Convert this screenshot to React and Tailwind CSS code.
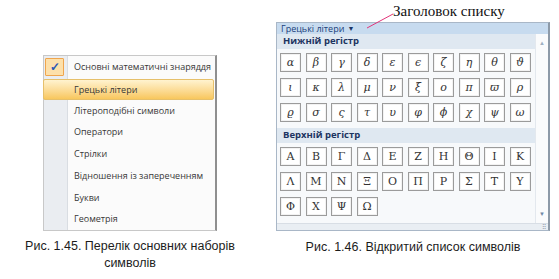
const MENU = [
  "Основні математичні знаряддя",
  "Грецькі літери",
  "Літероподібні символи",
  "Оператори",
  "Стрілки",
  "Відношення із запереченням",
  "Букви",
  "Геометрія",
];

const LOWER = [
  "α", "β", "γ", "δ", "ε", "ϵ", "ζ", "η", "θ", "ϑ",
  "ι", "κ", "λ", "μ", "ν", "ξ", "ο", "π", "ϖ", "ρ",
  "ϱ", "σ", "ς", "τ", "υ", "φ", "ϕ", "χ", "ψ", "ω",
];

const UPPER = [
  "Α", "Β", "Γ", "Δ", "Ε", "Ζ", "Η", "Θ", "Ι", "Κ",
  "Λ", "Μ", "Ν", "Ξ", "Ο", "Π", "Ρ", "Σ", "Τ", "Υ",
  "Φ", "Χ", "Ψ", "Ω",
];

function SymbolGrid({ symbols, italic }) {
  return (
    <div className="grid grid-cols-[repeat(10,21px)] gap-x-[4.5px] gap-y-[6px] pl-[3px]">
      {symbols.map((s) => (
        <div
          key={s}
          className={`flex h-[19px] w-[21px] items-center justify-center border border-[#9b9b9b] bg-white text-[11px] leading-none text-[#333] shadow-[inset_0_0_0_1px_#f2f2f2] ${italic ? "italic" : ""}`}
          style={{ fontFamily: '"DejaVu Serif", "Liberation Serif", serif' }}
        >
          {s}
        </div>
      ))}
    </div>
  );
}

function SubHeader({ children }) {
  return (
    <div className="flex h-[15px] items-center bg-[#dfe8f1] pl-[6px] text-[9.5px] font-bold text-[#1d3461]">
      {children}
    </div>
  );
}

export default function App() {
  return (
    <div
      className="flex h-[279px] w-[559px] bg-white"
      style={{ fontFamily: '"Open Sans", "Noto Sans", sans-serif' }}
    >
      {/* Left — menu of symbol sets */}
      <div className="flex w-[260px] flex-col items-center pt-[55px]">
        <div className="flex h-[176px] w-[174px] border border-[#c8c8c8] border-r-2 border-r-[#8f8f8f] bg-[#fbfbfb]">
          <div className="w-[24px] shrink-0 border-r border-[#d9dde2] bg-[#eaedf1]" />
          <div className="relative flex flex-1 flex-col">
            {MENU.map((label) => (
              <div key={label} className="flex h-[22px] items-center pl-[6px] text-[9px] text-[#383838]">
                {label}
              </div>
            ))}
            {/* highlight over the gutter + row */}
            <div className="absolute left-[-25px] top-[23px] flex h-[21px] w-[171px] items-center rounded-[2px] border border-[#e6c06b] bg-gradient-to-b from-[#fff3cf] to-[#f8c75c] pl-[30px] text-[9px] text-[#383838]">
              Грецькі літери
            </div>
            <div className="absolute left-[-23px] top-[2px] flex h-[18px] w-[19px] items-center justify-center rounded-[1px] border border-[#efa54d] bg-[#fde0aa] text-[12px] font-bold text-[#2a58b5]">
              ✓
            </div>
          </div>
        </div>
        <p
          className="mt-[7px] text-center text-[12.5px] leading-[17px] text-[#1c1c1c]"
          style={{ fontFamily: '"Liberation Sans", Arial, sans-serif' }}
        >
          Рис. 1.45. Перелік основних наборів
          <br />
          символів
        </p>
      </div>

      {/* Right — open list of symbols */}
      <div className="relative flex flex-1 flex-col pt-[22px]">
        <span
          className="absolute left-[133px] top-[2px] text-[15px] leading-[18px] text-[#111]"
          style={{ fontFamily: '"Liberation Serif", "Times New Roman", serif' }}
        >
          Заголовок списку
        </span>
        <svg className="absolute left-[105px] top-[12px]" width="30" height="18" viewBox="0 0 30 18">
          <path d="M2 16 L28 2" stroke="#e2357a" strokeWidth="1" fill="none" />
        </svg>

        <div className="ml-[16px] flex w-[274px] flex-col border border-[#a9b7c7] border-r-2 border-r-[#8d9aa8] bg-[#f7f9fb]">
          <div className="flex h-[11px] items-center bg-[#c7dbef] pl-[4px] text-[9px] leading-none text-[#20407a]">
            Грецькі літери <span className="ml-[3px] text-[7px] text-[#1b3566]">▼</span>
          </div>
          <div className="flex">
            <div className="flex w-[258px] flex-col pb-[7px]">
              <SubHeader>Нижній регістр</SubHeader>
              <div className="pt-[4px] pb-[6px]">
                <SymbolGrid symbols={LOWER} italic />
              </div>
              <SubHeader>Верхній регістр</SubHeader>
              <div className="pt-[4px]">
                <SymbolGrid symbols={UPPER} />
              </div>
            </div>
            <div className="flex flex-1 flex-col items-center justify-between border-l border-[#e3e8ee] bg-[#fafbfc] py-[6px]">
              <span className="text-[6px] leading-none text-[#9fb0c2]">▲</span>
              <span className="text-[6px] leading-none text-[#6f88a6]">▼</span>
            </div>
          </div>
          <div className="flex h-[7px] items-center justify-end border-t border-[#d8dee5] bg-[#e9eef3] pr-[3px]">
            <span className="text-[6px] leading-none tracking-[-1px] text-[#7b8794]">⠿</span>
          </div>
        </div>

        <p
          className="ml-[16px] mt-[8px] w-[274px] text-center text-[12.5px] leading-[17px] text-[#1c1c1c]"
          style={{ fontFamily: '"Liberation Sans", Arial, sans-serif' }}
        >
          Рис. 1.46. Відкритий список символів
        </p>
      </div>
    </div>
  );
}
